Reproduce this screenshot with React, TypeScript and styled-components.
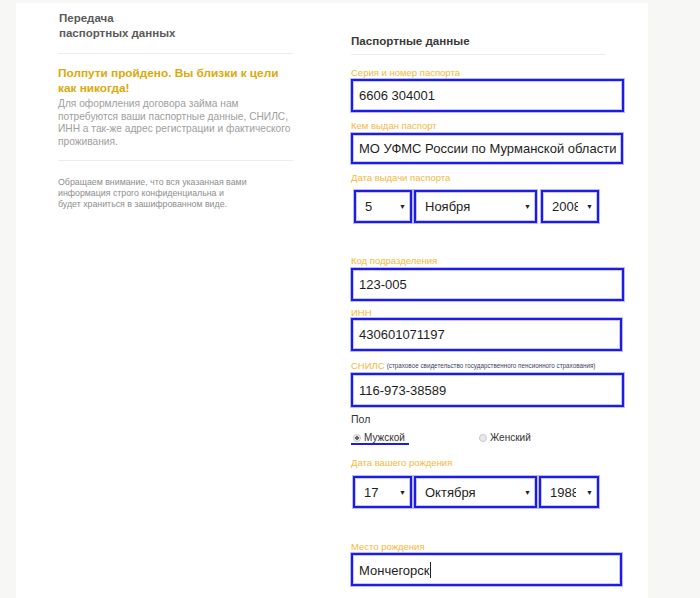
import React from "react";
import styled, { createGlobalStyle } from "styled-components";

const Global = createGlobalStyle`
  html, body { margin: 0; padding: 0; background: #f7f7f5; }
  body { font-family: "Liberation Sans", Arial, sans-serif; }
  * { box-sizing: border-box; }
`;

const Page = styled.div`
  width: 700px;
  height: 598px;
  padding: 3px 0 0 16px;
  overflow: hidden;
`;

const Sheet = styled.div`
  width: 632px;
  height: 595px;
  background: #fff;
  display: flex;
  padding-left: 42px;
`;

const LeftCol = styled.div`
  width: 235px;
  padding-top: 8px;
`;

const RightCol = styled.div`
  width: 280px;
  margin-left: 58px;
  padding-top: 30px;
`;

const StepTitle = styled.div`
  font-size: 11.5px;
  line-height: 15px;
  font-weight: 700;
  color: #5a5a5a;
  margin-left: 1px;
`;

const Divider = styled.div<{ $mt: number; $w: number }>`
  height: 1px;
  background: #ececec;
  margin-top: ${(p) => p.$mt}px;
  width: ${(p) => p.$w}px;
`;

const Promo = styled.div`
  margin-top: 12px;
  font-size: 11.8px;
  line-height: 15px;
  font-weight: 700;
  color: #dba90a;
`;

const Lead = styled.p`
  margin: 2px 0 0;
  font-size: 10.2px;
  line-height: 12.5px;
  color: #a0a0a0;
`;

const Note = styled.p`
  margin: 16px 0 0;
  font-size: 8.8px;
  line-height: 11px;
  color: #8e8e8e;
`;

const SectionTitle = styled.div`
  font-size: 11.6px;
  line-height: 16px;
  font-weight: 700;
  color: #3a3a3a;
`;

const Field = styled.div<{ $mt: number }>`
  margin-top: ${(p) => p.$mt}px;
  display: flex;
  flex-direction: column;
  align-items: flex-start;
`;

const Label = styled.label<{ $gap?: number }>`
  font-size: 9.5px;
  line-height: 11px;
  color: #f3b93a;
  margin-bottom: ${(p) => p.$gap ?? 1}px;
  white-space: nowrap;
`;

const Hint = styled.span`
  font-size: 6.3px;
  color: #3f3f5e;
  margin-left: 2px;
  vertical-align: 1px;
`;

const Box = styled.div<{ $w: number; $h?: number }>`
  width: ${(p) => p.$w}px;
  height: ${(p) => p.$h ?? 33}px;
  border: 2px solid #1c1ce8;
  box-shadow: 0 0 0 1px rgba(28, 28, 232, 0.3), inset 0 0 0 1px rgba(28, 28, 232, 0.25);
  background: #fff;
  display: flex;
  align-items: center;
  font-size: 13px;
  color: #1e1e1e;
`;

const TextValue = styled.span`
  padding-left: 6px;
  white-space: nowrap;
`;

const Caret = styled.span`
  display: inline-block;
  width: 1px;
  height: 16px;
  background: #222;
  vertical-align: -3px;
`;

const SelectRow = styled.div<{ $ml: number }>`
  display: flex;
  margin-left: ${(p) => p.$ml}px;
`;

const SelectBox = styled(Box)<{ $ml: number }>`
  margin-left: ${(p) => p.$ml}px;
  padding: 0 4px 0 9px;
  justify-content: space-between;
`;

const SelectValue = styled.span<{ $vw: number }>`
  width: ${(p) => p.$vw}px;
  overflow: hidden;
  white-space: nowrap;
`;

const Arrow = styled.span`
  font-size: 7px;
  color: #222;
`;

const GenderLabel = styled.div`
  font-size: 10.5px;
  line-height: 13px;
  color: #333;
`;

const RadioRow = styled.div`
  display: flex;
  margin-top: 6px;
`;

const RadioItem = styled.div<{ $w: number; $active?: boolean }>`
  width: ${(p) => p.$w}px;
  display: flex;
  align-items: center;
  gap: 3px;
  font-size: 10px;
  line-height: 12px;
  color: #333;
  padding-left: 2px;
  position: relative;
  &::after {
    content: "";
    display: ${(p) => (p.$active ? "block" : "none")};
    position: absolute;
    left: 0;
    bottom: -1px;
    width: 58px;
    height: 2px;
    background: #1c1ce8;
  }
`;

const RadioDot = styled.span<{ $on?: boolean }>`
  width: 8px;
  height: 8px;
  border-radius: 50%;
  border: 1px solid #c8c8c8;
  background: ${(p) => (p.$on ? "radial-gradient(circle, #666 0 1.6px, #eee 2px)" : "#e9e9e9")};
`;

function Select({
  w,
  h,
  vw,
  ml,
  value,
}: {
  w: number;
  h?: number;
  vw: number;
  ml: number;
  value: string;
}) {
  return (
    <SelectBox $w={w} $h={h} $ml={ml}>
      <SelectValue $vw={vw}>{value}</SelectValue>
      <Arrow>▼</Arrow>
    </SelectBox>
  );
}

export default function App() {
  return (
    <>
      <Global />
      <Page>
        <Sheet>
          <LeftCol>
            <StepTitle>
              Передача
              <br />
              паспортных данных
            </StepTitle>
            <Divider $mt={12} $w={235} />
            <Promo>
              Полпути пройдено. Вы близки к цели
              <br />
              как никогда!
            </Promo>
            <Lead>
              Для оформления договора займа нам
              <br />
              потребуются ваши паспортные данные, СНИЛС,
              <br />
              ИНН а так-же адрес регистрации и фактического
              <br />
              проживания.
            </Lead>
            <Divider $mt={12} $w={235} />
            <Note>
              Обращаем внимание, что вся указанная вами
              <br />
              информация строго конфиденциальна и
              <br />
              будет храниться в зашифрованном виде.
            </Note>
          </LeftCol>
          <RightCol>
            <SectionTitle>Паспортные данные</SectionTitle>
            <Divider $mt={5} $w={254} />
            <Field $mt={12}>
              <Label>Серия и номер паспорта</Label>
              <Box $w={273}>
                <TextValue>6606 304001</TextValue>
              </Box>
            </Field>
            <Field $mt={8}>
              <Label $gap={2}>Кем выдан паспорт</Label>
              <Box $w={272} $h={31}>
                <TextValue>МО УФМС России по Мурманской области</TextValue>
              </Box>
            </Field>
            <Field $mt={8}>
              <Label $gap={7}>Дата выдачи паспорта</Label>
              <SelectRow $ml={3}>
                <Select ml={0} w={58} vw={20} value="5" />
                <Select ml={2} w={123} vw={95} value="Ноября" />
                <Select ml={4} w={58} vw={26} value="2008" />
              </SelectRow>
            </Field>
            <Field $mt={32}>
              <Label $gap={2}>Код подразделения</Label>
              <Box $w={273}>
                <TextValue>123-005</TextValue>
              </Box>
            </Field>
            <Field $mt={6}>
              <Label $gap={0}>ИНН</Label>
              <Box $w={271}>
                <TextValue>430601071197</TextValue>
              </Box>
            </Field>
            <Field $mt={9}>
              <Label $gap={2}>
                СНИЛС<Hint>(страховое свидетельство государственного пенсионного страхования)</Hint>
              </Label>
              <Box $w={273} $h={34}>
                <TextValue>116-973-38589</TextValue>
              </Box>
            </Field>
            <Field $mt={6}>
              <GenderLabel>Пол</GenderLabel>
              <RadioRow>
                <RadioItem $w={126} $active>
                  <RadioDot $on />
                  Мужской
                </RadioItem>
                <RadioItem $w={100}>
                  <RadioDot />
                  Женский
                </RadioItem>
              </RadioRow>
            </Field>
            <Field $mt={13}>
              <Label $gap={8}>Дата вашего рождения</Label>
              <SelectRow $ml={2}>
                <Select ml={0} w={59} h={32} vw={20} value="17" />
                <Select ml={2} w={123} h={32} vw={95} value="Октября" />
                <Select ml={2} w={60} h={32} vw={26} value="1988" />
              </SelectRow>
            </Field>
            <Field $mt={33}>
              <Label>Место рождения</Label>
              <Box $w={271}>
                <TextValue>
                  Мончегорск
                  <Caret />
                </TextValue>
              </Box>
            </Field>
          </RightCol>
        </Sheet>
      </Page>
    </>
  );
}
